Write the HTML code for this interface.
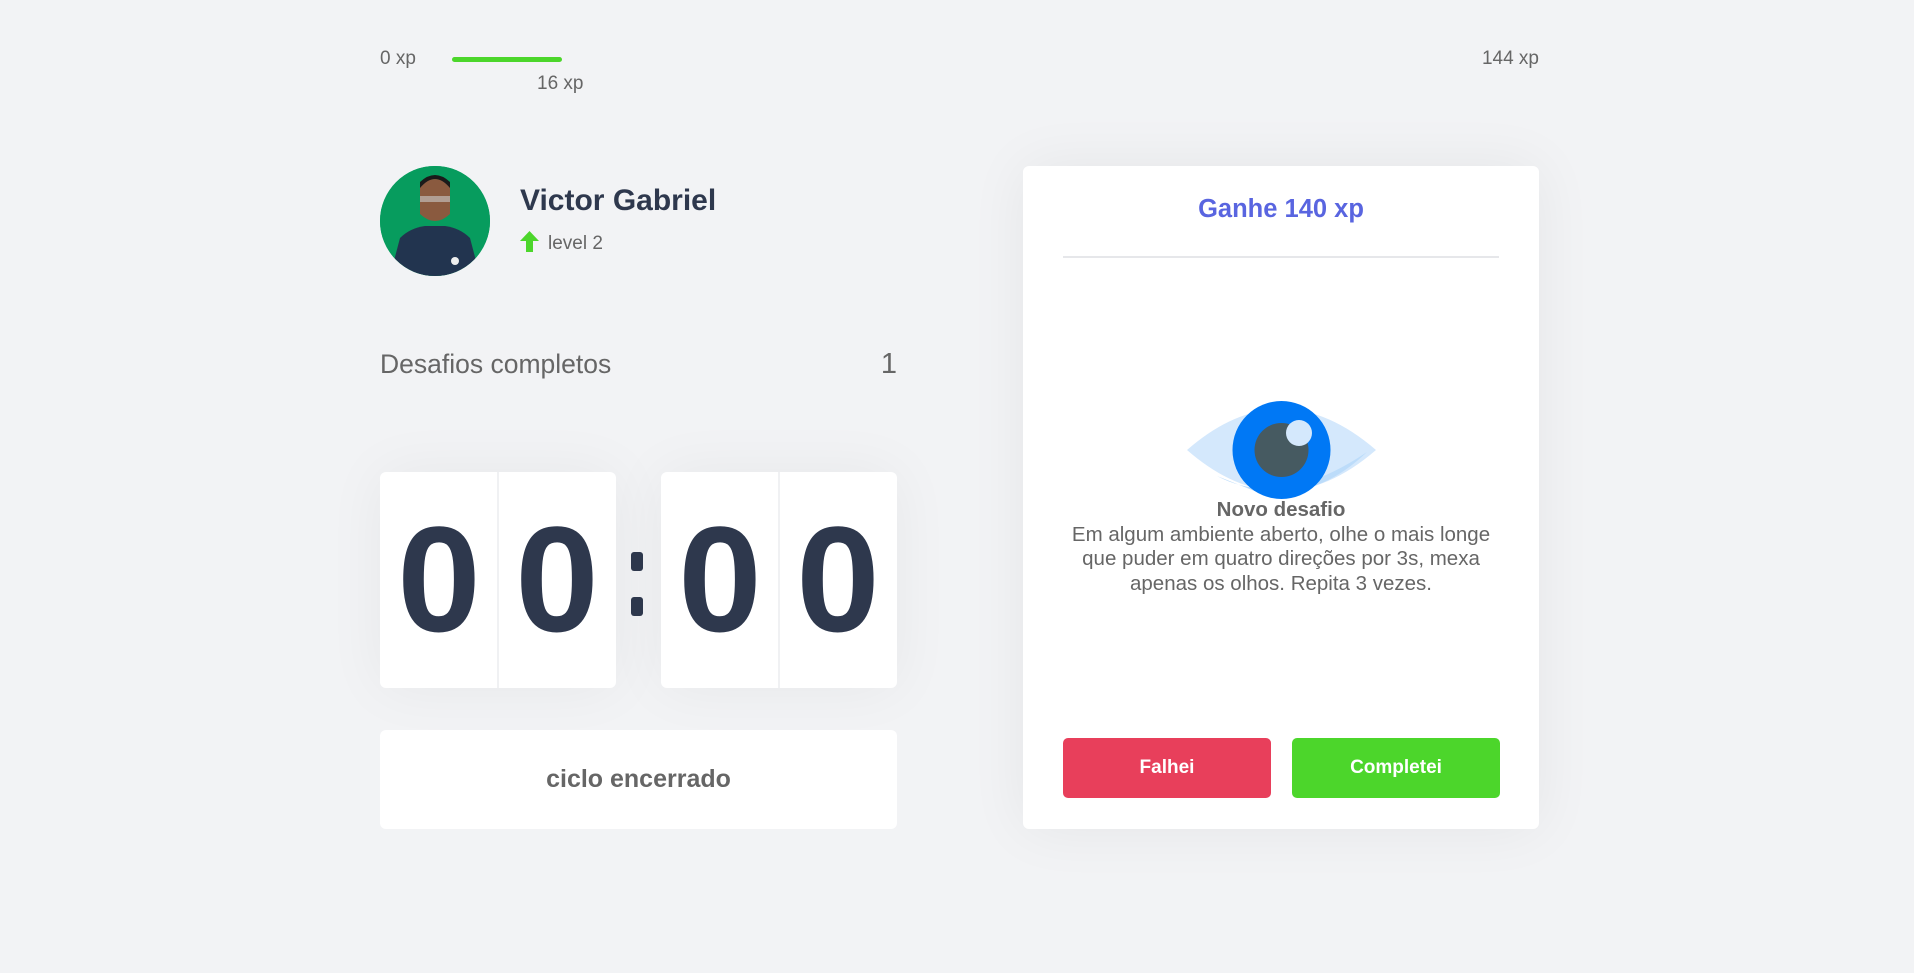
<!DOCTYPE html>
<html><head><meta charset="utf-8"><style>
*{margin:0;padding:0;box-sizing:border-box}
body{width:1914px;height:973px;background:#f2f3f5;font-family:"Liberation Sans",Arial,sans-serif;color:#666;position:relative;overflow:hidden}
.a{position:absolute}
.card{background:#fff;border-radius:6px}
.dg{position:absolute;top:0;width:50%;height:100%;text-align:center;font-size:150px;line-height:215px;color:#2e384d;font-weight:600}
</style></head><body>
<div class="a" style="left:380px;top:48px;font-size:19px;">0 xp</div>
<div class="a" style="left:452px;top:57px;width:110px;height:5px;background:#4cd62b;border-radius:3px"></div>
<div class="a" style="left:537px;top:73px;font-size:19px;">16 xp</div>
<div class="a" style="left:1476px;top:48px;font-size:19px;width:63px;text-align:right">144 xp</div>

<div class="a" style="left:380px;top:166px;width:110px;height:110px;border-radius:50%;overflow:hidden;background:#0a9a5c">
<svg width="110" height="110" viewBox="0 0 110 110"><rect width="110" height="110" fill="#079c5e"/><path d="M10 110 L20 72 Q30 62 45 60 L65 60 Q80 62 90 72 L100 110Z" fill="#22344f"/><path d="M40 18 Q55 8 70 18 L70 48 Q55 62 40 48Z" fill="#8a5a3f"/><path d="M40 22 Q55 4 70 22 L70 16 Q55 2 40 16Z" fill="#1a1a1a"/><rect x="40" y="30" width="30" height="6" fill="#ccc" opacity=".6"/><circle cx="75" cy="95" r="4" fill="#eee"/></svg></div>
<div class="a" style="left:520px;top:184px;font-size:30px;font-weight:bold;color:#2e384d">Victor Gabriel</div>
<svg class="a" style="left:520px;top:231px" width="19" height="21" viewBox="0 0 19 21"><path d="M9.5 0 L19 10 H13 V21 H6 V10 H0Z" fill="#4cd62b"/></svg>
<div class="a" style="left:548px;top:233px;font-size:19px;">level 2</div>

<div class="a" style="left:380px;top:349px;font-size:26.5px;">Desafios completos</div>
<div class="a" style="left:860px;top:348px;font-size:29px;width:37px;text-align:right">1</div>

<div class="a card" style="left:380px;top:472px;width:236px;height:216px;box-shadow:0 0 60px rgba(0,0,0,.05)"><div class="dg" style="left:0">0</div><div class="a" style="left:117px;top:0;width:2px;height:100%;background:#f0f1f3"></div><div class="dg" style="left:50%">0</div></div>
<div class="a" style="left:631px;top:552px;width:12px;height:19px;background:#2e384d;border-radius:3px"></div>
<div class="a" style="left:631px;top:597px;width:12px;height:19px;background:#2e384d;border-radius:3px"></div>
<div class="a card" style="left:661px;top:472px;width:236px;height:216px;box-shadow:0 0 60px rgba(0,0,0,.05)"><div class="dg" style="left:0">0</div><div class="a" style="left:117px;top:0;width:2px;height:100%;background:#f0f1f3"></div><div class="dg" style="left:50%">0</div></div>

<div class="a card" style="left:380px;top:730px;width:517px;height:99px;text-align:center;line-height:99px;font-size:25px;font-weight:bold">ciclo encerrado</div>

<div class="a card" style="left:1023px;top:166px;width:516px;height:663px;box-shadow:0 0 60px rgba(0,0,0,.06)">
<div class="a" style="left:0;top:29px;width:100%;text-align:center;font-size:25.5px;font-weight:bold;color:#5965e0">Ganhe 140 xp</div>
<div class="a" style="left:40px;top:90px;width:436px;height:2px;background:#e6e7ea"></div>
<svg class="a" style="left:164px;top:234px" width="189" height="100" viewBox="0 0 189 100"><path d="M0 50 Q94 -32 189 50 Q94 132 0 50Z" fill="#d4e8fc"/><path d="M30 76 Q94 110 180 52 Q130 100 70 92Z" fill="#bcdcfa"/><circle cx="94.5" cy="50" r="49" fill="#0078f5"/><path d="M94.5 1 A49 49 0 0 1 94.5 99 A49 49 0 0 0 94.5 1" fill="#0066ec"/><circle cx="94.5" cy="50" r="27" fill="#465a61"/><circle cx="112" cy="33" r="13" fill="#d4e8fc"/></svg>
<div class="a" style="left:0;top:332px;width:100%;text-align:center;font-size:20.5px;line-height:24.5px">
<b>Novo desafio</b><br>Em algum ambiente aberto, olhe o mais longe<br>que puder em quatro direções por 3s, mexa<br>apenas os olhos. Repita 3 vezes.</div>
<div class="a" style="left:40px;top:572px;width:208px;height:60px;background:#e83f5b;border-radius:5px;color:#fff;font-weight:bold;font-size:19px;text-align:center;line-height:60px">Falhei</div>
<div class="a" style="left:269px;top:572px;width:208px;height:60px;background:#4cd62b;border-radius:5px;color:#fff;font-weight:bold;font-size:19px;text-align:center;line-height:60px">Completei</div>
</div>
</body></html>
